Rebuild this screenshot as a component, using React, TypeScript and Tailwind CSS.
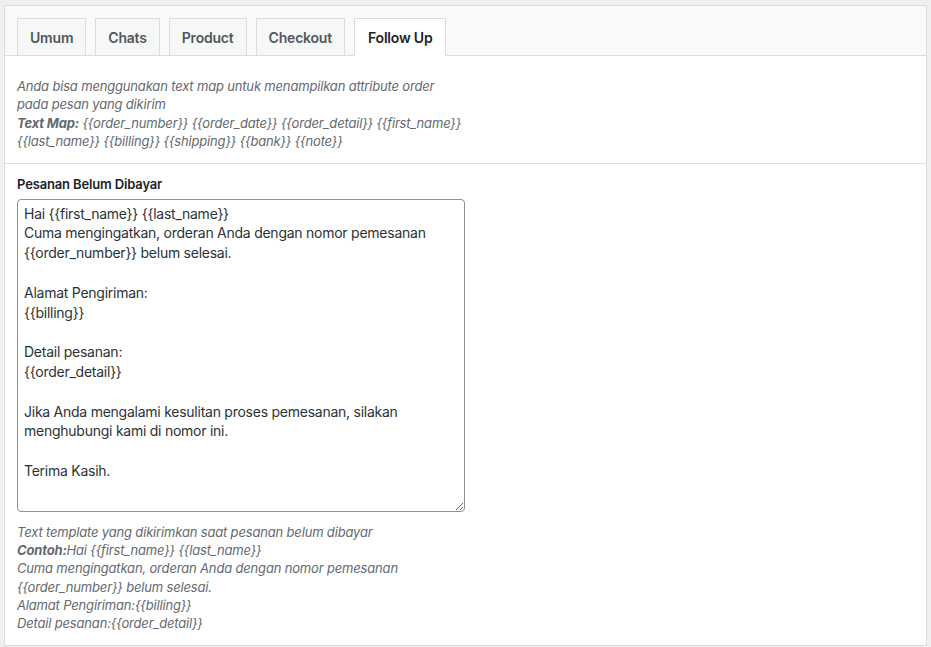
import React from "react";

const tabs = ["Umum", "Chats", "Product", "Checkout", "Follow Up"];

const template = `Hai {{first_name}} {{last_name}}
Cuma mengingatkan, orderan Anda dengan nomor pemesanan {{order_number}} belum selesai.

Alamat Pengiriman:
{{billing}}

Detail pesanan:
{{order_detail}}

Jika Anda mengalami kesulitan proses pemesanan, silakan menghubungi kami di nomor ini.

Terima Kasih.`;

export default function App() {
  return (
    <div
      className="min-h-[647px] bg-[#f0f0f1] pt-[5px] pl-[4px]"
      style={{ fontFamily: 'Inter, "Liberation Sans", Arial, sans-serif' }}
    >
      <div className="w-[923px] border border-[#dcdcde] bg-white">
        {/* tab bar */}
        <div className="flex gap-[9px] border-b border-[#dcdcde] bg-[#f9f9f9] pl-[12px] pt-[12px]">
          {tabs.map((t) => {
            const active = t === "Follow Up";
            return (
              <div
                key={t}
                className={
                  active
                    ? "-mb-px flex h-[38px] items-center border border-b-white border-[#dcdcde] bg-white px-[13px] text-[14px] font-semibold tracking-[-0.2px] text-[#1d2327]"
                    : "flex h-[37px] items-center border border-b-0 border-[#dcdcde] bg-[#f6f7f7] px-[12px] text-[14px] font-semibold tracking-[-0.2px] text-[#50575e]"
                }
              >
                {t}
              </div>
            );
          })}
        </div>

        {/* description */}
        <div className="border-b border-[#dcdcde] px-[12px] pt-[21px] pb-[12px] text-[13px] italic leading-[18.4px] tracking-[-0.17px] text-[#646970]">
          <p>Anda bisa menggunakan text map untuk menampilkan attribute order</p>
          <p>pada pesan yang dikirim</p>
          <p>
            <span className="font-bold">Text Map:</span> {"{{order_number}} {{order_date}} {{order_detail}} {{first_name}}"}
          </p>
          <p>{"{{last_name}} {{billing}} {{shipping}} {{bank}} {{note}}"}</p>
        </div>

        {/* field */}
        <div className="px-[12px] pt-[11px] pb-[13px]">
          <label className="block text-[13px] font-semibold leading-[18px] tracking-[-0.15px] text-[#1d2327]">
            Pesanan Belum Dibayar
          </label>
          <textarea
            defaultValue={template}
            className="mt-[6px] block h-[313px] w-[448px] rounded-[4px] border border-[#8c8f94] bg-white px-[6px] py-[4px] text-[14px] leading-[19.8px] tracking-[-0.25px] text-[#2c3338] outline-none"
            style={{ fontFamily: 'Inter, "Liberation Sans", Arial, sans-serif' }}
          />
          <div className="mt-[11px] text-[13px] italic leading-[18.3px] tracking-[-0.17px] text-[#646970]">
            <p>Text template yang dikirimkan saat pesanan belum dibayar</p>
            <p>
              <span className="font-bold">Contoh:</span>
              {"Hai {{first_name}} {{last_name}}"}
            </p>
            <p>Cuma mengingatkan, orderan Anda dengan nomor pemesanan</p>
            <p>{"{{order_number}} belum selesai."}</p>
            <p>{"Alamat Pengiriman:{{billing}}"}</p>
            <p>{"Detail pesanan:{{order_detail}}"}</p>
          </div>
        </div>
      </div>
    </div>
  );
}
